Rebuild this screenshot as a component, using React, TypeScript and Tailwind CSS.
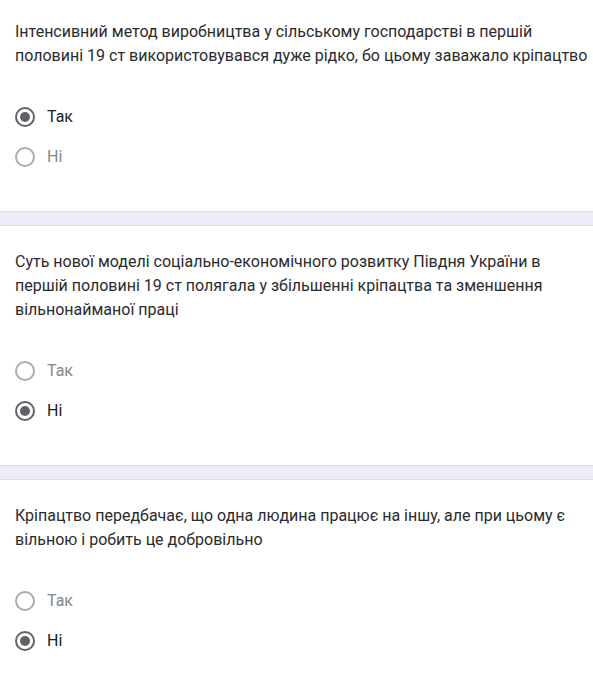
import React from 'react';

const questions = [
  {
    text: 'Інтенсивний метод виробництва у сільському господарстві в першій половині 19 ст використовувався дуже рідко, бо цьому заважало кріпацтво',
    answer: 'Так',
  },
  {
    text: 'Суть нової моделі соціально-економічного розвитку Півдня України в першій половині 19 ст полягала у збільшенні кріпацтва та зменшення вільнонайманої праці',
    answer: 'Ні',
  },
  {
    text: 'Кріпацтво передбачає, що одна людина працює на іншу, але при цьому є вільною і робить це добровільно',
    answer: 'Ні',
  },
];

const Radio = ({ label, checked }: { label: string; checked: boolean }) => (
  <div className="flex items-center h-10">
    <span
      className={
        checked
          ? 'w-5 h-5 rounded-full border-2 border-[#5f6368] flex items-center justify-center'
          : 'w-5 h-5 rounded-full border-2 border-[#a8abaf]'
      }
    >
      {checked && <span className="w-[10px] h-[10px] rounded-full bg-[#5f6368]"></span>}
    </span>
    <span className={checked ? 'ml-3 text-[#202124]' : 'ml-3 text-[#80868b]'}>{label}</span>
  </div>
);

const Question = ({ text, answer, first, last }: any) => (
  <div className={`pl-[15px] pr-1 ${first ? 'pt-5' : 'pt-6'} ${last ? 'pb-[27px]' : 'pb-[34px]'}`}>
    <p className="text-[#2a2b2e] leading-6">{text}</p>
    <div className="mt-[29px]">
      <Radio label="Так" checked={answer === 'Так'} />
      <Radio label="Ні" checked={answer === 'Ні'} />
    </div>
  </div>
);

export default function App() {
  return (
    <div className="w-[593px] bg-white text-base" style={{ fontFamily: 'Roboto, "Liberation Sans", sans-serif' }}>
      {questions.map((q, i) => (
        <React.Fragment key={i}>
          {i > 0 && <div className="h-[15px] bg-[#efebf8] border-y border-[#dddae6]"></div>}
          <Question text={q.text} answer={q.answer} first={i === 0} last={i === questions.length - 1} />
        </React.Fragment>
      ))}
    </div>
  );
}
